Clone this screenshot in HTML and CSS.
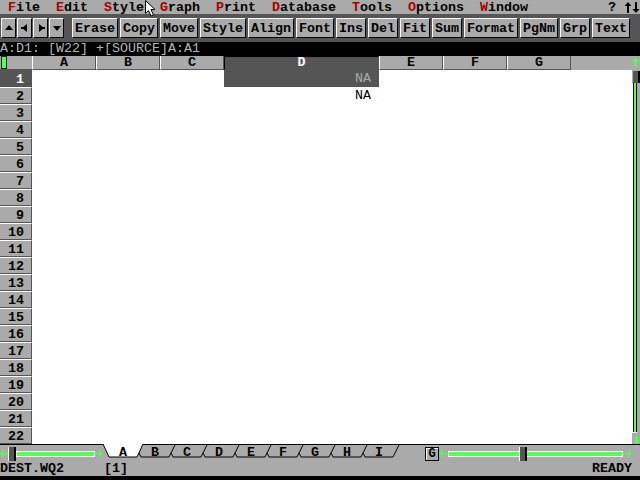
FILE: index.html
```html
<!DOCTYPE html>
<html>
<head>
<meta charset="utf-8">
<title>Quattro Pro</title>
<link rel="stylesheet" href="styles.css">
</head>
<body>
<div class="app">
  <div class="menubar">
    <div class="menus"> <span class="hot">F</span>ile  <span class="hot">E</span>dit  <span class="hot">S</span>tyle  <span class="hot">G</span>raph  <span class="hot">P</span>rint  <span class="hot">D</span>atabase  <span class="hot">T</span>ools  <span class="hot">O</span>ptions  <span class="hot">W</span>indow</div>
    <div class="menu-right">? <svg class="updown" width="16" height="11" viewBox="0 0 16 11"><path d="M4 0 L7.5 4 H5 V11 H3 V4 H0.5 Z" fill="#000"/><path d="M12 11 L15.5 7 H13 V0 H11 V7 H8.5 Z" fill="#000"/></svg></div>
  </div>

  <div class="toolbar">
    <div class="arrows">
      <div class="abtn"><svg width="8" height="6" viewBox="0 0 8 6"><polygon points="0,5 8,5 4,0" fill="#000"/></svg></div>
      <div class="abtn"><svg width="8" height="8" viewBox="0 0 8 8"><polygon points="1,4 6,0 6,8" fill="#000"/><rect x="0" y="3" width="2" height="2" fill="#000"/></svg></div>
      <div class="abtn"><svg width="8" height="8" viewBox="0 0 8 8"><polygon points="7,4 2,0 2,8" fill="#000"/><rect x="6" y="3" width="2" height="2" fill="#000"/></svg></div>
      <div class="abtn"><svg width="8" height="6" viewBox="0 0 8 6"><polygon points="0,1 8,1 4,6" fill="#000"/></svg></div>
    </div>
    <div class="tools">
      <div class="btn">Erase</div>
      <div class="btn">Copy</div>
      <div class="btn">Move</div>
      <div class="btn">Style</div>
      <div class="btn">Align</div>
      <div class="btn">Font</div>
      <div class="btn">Ins</div>
      <div class="btn">Del</div>
      <div class="btn">Fit</div>
      <div class="btn">Sum</div>
      <div class="btn">Format</div>
      <div class="btn">PgNm</div>
      <div class="btn">Grp</div>
      <div class="btn">Text</div>
    </div>
  </div>

  <div class="inputline">A:D1: [W22] +[SOURCE]A:A1</div>

  <div class="sheet">
    <div class="corner"><div class="ind"></div></div>
    <div class="colheads">
      <div class="ch">A</div>
      <div class="ch">B</div>
      <div class="ch">C</div>
      <div class="ch wide sel">D</div>
      <div class="ch">E</div>
      <div class="ch">F</div>
      <div class="ch">G</div>
      <div class="chfill"></div>
    </div>
    <div class="vs-top">
      <svg width="7" height="9" viewBox="0 0 7 9"><path d="M3.5 0 L7 3.5 H4.5 V9 H2.5 V3.5 H0 Z" fill="#55ff55"/></svg>
    </div>

    <div class="rowheads">
      <div class="rh sel">1</div>
      <div class="rh">2</div>
      <div class="rh">3</div>
      <div class="rh">4</div>
      <div class="rh">5</div>
      <div class="rh">6</div>
      <div class="rh">7</div>
      <div class="rh">8</div>
      <div class="rh">9</div>
      <div class="rh">10</div>
      <div class="rh">11</div>
      <div class="rh">12</div>
      <div class="rh">13</div>
      <div class="rh">14</div>
      <div class="rh">15</div>
      <div class="rh">16</div>
      <div class="rh">17</div>
      <div class="rh">18</div>
      <div class="rh">19</div>
      <div class="rh">20</div>
      <div class="rh">21</div>
      <div class="rh">22</div>
    </div>

    <div class="cells">
      <div class="c"></div><div class="c"></div><div class="c"></div><div class="c cur">NA</div><div class="c"></div><div class="c"></div><div class="c"></div>
      <div class="c"></div><div class="c"></div><div class="c"></div><div class="c">NA</div><div class="c"></div><div class="c"></div><div class="c"></div>
    </div>

    <div class="vscroll">
      <div class="vthumb"></div>
      <div class="vtrack"></div>
      <svg class="vdown" width="7" height="9" viewBox="0 0 7 9"><path d="M3.5 9 L7 5.5 H4.5 V0 H2.5 V5.5 H0 Z" fill="#55ff55"/></svg>
    </div>
  </div>

  <div class="bottombar">
    <div class="hscroll-left">
      <svg class="harrow" width="8" height="7" viewBox="0 0 8 7"><path d="M8 3.5 H1 M4 0.5 L1 3.5 L4 6.5" fill="none" stroke="#55ff55" stroke-width="1.5"/></svg>
      <div class="hthumb"></div>
      <div class="htrack full"></div>
      <svg class="harrow" width="8" height="7" viewBox="0 0 8 7"><path d="M0 3.5 H7 M4 0.5 L7 3.5 L4 6.5" fill="none" stroke="#55ff55" stroke-width="1.5"/></svg>
    </div>

    <svg class="tabs" width="300" height="18" viewBox="0 0 300 18">
      <g class="tab"><path d="M256 1 L262 13 L290 13 L296 1" fill="#aaa" stroke="#000"/><text x="276" y="12">I</text></g>
      <g class="tab"><path d="M224 1 L230 13 L258 13 L264 1" fill="#aaa" stroke="#000"/><text x="244" y="12">H</text></g>
      <g class="tab"><path d="M192 1 L198 13 L226 13 L232 1" fill="#aaa" stroke="#000"/><text x="212" y="12">G</text></g>
      <g class="tab"><path d="M160 1 L166 13 L194 13 L200 1" fill="#aaa" stroke="#000"/><text x="180" y="12">F</text></g>
      <g class="tab"><path d="M128 1 L134 13 L162 13 L168 1" fill="#aaa" stroke="#000"/><text x="148" y="12">E</text></g>
      <g class="tab"><path d="M96 1 L102 13 L130 13 L136 1" fill="#aaa" stroke="#000"/><text x="116" y="12">D</text></g>
      <g class="tab"><path d="M64 1 L70 13 L98 13 L104 1" fill="#aaa" stroke="#000"/><text x="84" y="12">C</text></g>
      <g class="tab"><path d="M32 1 L38 13 L66 13 L72 1" fill="#aaa" stroke="#000"/><text x="52" y="12">B</text></g>
      <line x1="0" y1="0.5" x2="300" y2="0.5" stroke="#000"/>
      <g class="tab"><path d="M0 0 L6 13 L34 13 L40 0" fill="#fff" stroke="#000"/><text x="20" y="12">A</text></g>
    </svg>

    <div class="hscroll-right">
      <div class="gbtn">G</div>
      <svg class="harrow2" width="9" height="7" viewBox="0 0 9 7"><path d="M9 3.5 H1 M4 0.5 L1 3.5 L4 6.5" fill="none" stroke="#55ff55" stroke-width="1.5"/></svg>
      <div class="htrack left"></div>
      <div class="hthumb"></div>
      <div class="htrack right"></div>
      <svg class="harrow2" width="9" height="7" viewBox="0 0 9 7"><path d="M0 3.5 H8 M5 0.5 L8 3.5 L5 6.5" fill="none" stroke="#55ff55" stroke-width="1.5"/></svg>
    </div>
  </div>

  <div class="status">
    <div class="status-left">DEST.WQ2     [1]</div>
    <div class="status-right">READY</div>
  </div>
  <div class="bottomedge"></div>

  <svg class="cursor" width="12" height="17" viewBox="0 0 12 17"><path d="M0.5 0.5 L0.5 13.5 L3.5 10.5 L6 16 L8.5 15 L6 9.5 L10 9.5 Z" fill="#fff" stroke="#000"/></svg>
</div>
</body>
</html>
```

FILE: styles.css
```css
* {
  box-sizing: border-box;
  margin: 0;
  padding: 0;
}

html, body {
  width: 640px;
  height: 480px;
  overflow: hidden;
  background: #000;
}

body {
  font-family: "Liberation Mono", "DejaVu Sans Mono", monospace;
  font-size: 13.33px;
  line-height: 14px;
  color: #000;
}

.app {
  position: relative;
  width: 640px;
  height: 480px;
  display: flex;
  flex-direction: column;
  background: #aaa;
}

/* menu bar */
.menubar {
  height: 14px;
  display: flex;
  justify-content: space-between;
  font-weight: bold;
  white-space: pre;
  padding-top: 1px;
  line-height: 13px;
  background: #aaa;
}

.hot {
  color: #aa0000;
}

.menu-right {
  display: flex;
  align-items: flex-start;
  width: 32px;
}

.updown {
  margin-top: 1px;
  flex: none;
}

/* toolbar */
.toolbar {
  height: 28px;
  background: #555;
  display: flex;
  align-items: flex-start;
  padding: 4px 0 0 1px;
}

.arrows {
  display: flex;
  gap: 1px;
}

.abtn {
  width: 15px;
  height: 20px;
  background: #aaa;
  border: 1px solid;
  border-color: #fff #000 #000 #fff;
  display: flex;
  align-items: center;
  justify-content: center;
}

.tools {
  display: flex;
  gap: 2px;
  margin-left: 8px;
}

.btn {
  height: 20px;
  padding: 2px 2px 0;
  background: #aaa;
  border: 1px solid;
  border-color: #fff #000 #000 #fff;
  font-weight: bold;
  line-height: 16px;
  white-space: pre;
}

/* input line */
.inputline {
  height: 14px;
  background: #000;
  color: #b4b4b4;
  white-space: pre;
  line-height: 14px;
}

/* sheet */
.sheet {
  display: grid;
  grid-template-columns: 32px 600px 8px;
  grid-template-rows: 14px 374px;
  background: #aaa;
}

.corner {
  background: #aaa;
  border-bottom: 1px solid #555;
  padding: 0 0 0 1px;
}

.ind {
  width: 6px;
  height: 13px;
  background: #55ff55;
  border: 1px solid #222;
}

.colheads {
  display: flex;
  background: #aaa;
}

.ch {
  width: 64px;
  height: 14px;
  border-left: 1px solid #fff;
  border-right: 1px solid #555;
  border-bottom: 1px solid #555;
  text-align: center;
  font-weight: bold;
  line-height: 13px;
}

.ch.wide {
  width: 155px;
}

.ch.sel {
  background: #555;
  color: #fff;
  border-left-color: #000;
  border-top: 1px solid #000;
  line-height: 12px;
}

.chfill {
  flex: 1;
  background: #aaa;
}

.vs-top {
  display: flex;
  justify-content: flex-end;
  padding: 2px 1px 0 0;
  background: #aaa;
}

.rowheads {
  display: flex;
  flex-direction: column;
}

.rh {
  height: 17px;
  background: #aaa;
  border-top: 1px solid #fff;
  border-bottom: 1px solid #555;
  border-right: 1px solid #555;
  text-align: right;
  padding: 2px 7px 0 0;
  line-height: 14px;
  font-weight: bold;
}

.rh.sel {
  background: #555;
  color: #fff;
  border-top-color: #555;
}

.cells {
  background: #fff;
  display: grid;
  grid-template-columns: 64px 64px 64px 155px 64px 64px 64px;
  grid-auto-rows: 17px;
  align-content: start;
}

.c {
  text-align: right;
  padding-right: 8px;
  line-height: 17px;
  color: #000;
}

.c.cur {
  background: #555;
  color: #aaa;
}

.vscroll {
  display: flex;
  flex-direction: column;
  align-items: flex-start;
  background: #aaa;
}

.vthumb {
  margin: 1px 0 0 1px;
  width: 7px;
  height: 12px;
  background: #555;
  border-right: 2px solid #000;
}

.vtrack {
  flex: 1;
  width: 5px;
  border-left: 1px solid #fff;
  border-bottom: 1px solid #fff;
  background: linear-gradient(to right, #000 0 1px, #55ff55 1px 3px, #000 3px 4px);
}

.vdown {
  margin: 2px 0 0 1px;
}

/* bottom bar */
.bottombar {
  height: 18px;
  display: flex;
  align-items: center;
  border-top: 1px solid #000;
  background: #aaa;
}

.hscroll-left {
  width: 103px;
  display: flex;
  align-items: center;
}

.harrow {
  flex: none;
}

.hthumb {
  flex: none;
  width: 8px;
  height: 14px;
  background: #555;
  border-left: 1px solid #fff;
  border-right: 2px solid #000;
}

.htrack {
  height: 6px;
  background: #55ff55;
  border-top: 1px solid #fff;
  border-bottom: 1px solid #fff;
}

.htrack.full {
  width: 80px;
  border-left: 1px solid #fff;
  border-right: 1px solid #fff;
}

.htrack.left {
  width: 71px;
  border-left: 1px solid #fff;
}

.htrack.right {
  width: 96px;
  border-right: 1px solid #fff;
}

.tabs {
  flex: none;
  align-self: flex-start;
  margin-top: -1px;
  overflow: visible;
}

.tabs text {
  font-family: "Liberation Mono", "DejaVu Sans Mono", monospace;
  font-size: 13.33px;
  font-weight: bold;
  text-anchor: middle;
  fill: #000;
}

.hscroll-right {
  margin-left: auto;
  width: 215px;
  padding-right: 8px;
  display: flex;
  align-items: center;
}

.gbtn {
  width: 14px;
  height: 14px;
  border: 1px solid #000;
  box-shadow: inset 1px 1px 0 #fff;
  background: #aaa;
  font-weight: bold;
  font-size: 12px;
  line-height: 12px;
  text-align: center;
}

.harrow2 {
  flex: none;
}

/* status */
.status {
  height: 14px;
  display: flex;
  justify-content: space-between;
  font-weight: bold;
  white-space: pre;
  padding-right: 8px;
  line-height: 14px;
}

.bottomedge {
  height: 4px;
  background: #000;
}

.cursor {
  position: absolute;
  left: 145px;
  top: 0;
}
```
